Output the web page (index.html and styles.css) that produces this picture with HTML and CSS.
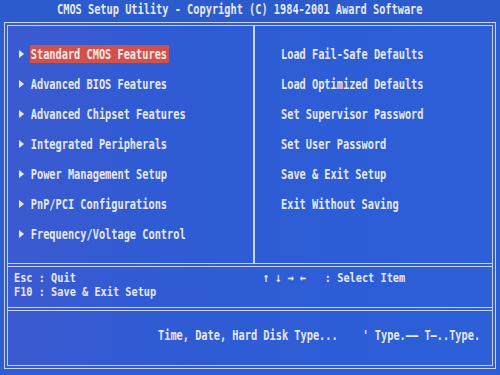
FILE: index.html
```html
<!DOCTYPE html>
<html lang="en">
    <head>
        <meta charset="utf-8">
        <title>CMOS Setup Utility</title>
        <link rel="stylesheet" href="styles.css">
    </head>
    <body>
        <header class="title"><span class="t">CMOS Setup Utility - Copyright (C) 1984-2001 Award Software</span></header>
        <main class="frame">
            <section class="menu">
                <ul class="col left">
                    <li class="sel"><span class="t">Standard CMOS Features</span></li>
                    <li><span class="t">Advanced BIOS Features</span></li>
                    <li><span class="t">Advanced Chipset Features</span></li>
                    <li><span class="t">Integrated Peripherals</span></li>
                    <li><span class="t">Power Management Setup</span></li>
                    <li><span class="t">PnP/PCI Configurations</span></li>
                    <li><span class="t">Frequency/Voltage Control</span></li>
                </ul>
                <ul class="col right">
                    <li><span class="t">Load Fail-Safe Defaults</span></li>
                    <li><span class="t">Load Optimized Defaults</span></li>
                    <li><span class="t">Set Supervisor Password</span></li>
                    <li><span class="t">Set User Password</span></li>
                    <li><span class="t">Save &amp; Exit Setup</span></li>
                    <li><span class="t">Exit Without Saving</span></li>
                </ul>
            </section>
            <section class="keys">
                <div class="line"><span class="t">Esc : Quit</span><span class="t">↑ ↓ → ←   : Select Item</span></div>
                <div class="line"><span class="t">F10 : Save &amp; Exit Setup</span></div>
            </section>
            <section class="desc">
                <span class="t">Time, Date, Hard Disk Type...    ' Type.—— T—..Type.</span>
            </section>
        </main>
    </body>
</html>
```

FILE: styles.css
```css
html {
    background-color: #2c5dd2;
    color: #e6e8f2;
    font-family: "DejaVu Sans Mono", monospace;
    font-weight: bold;
    font-size: 14px;
}

body {
    margin: 0;
    width: 500px;
    height: 375px;
    overflow: hidden;
}

/* BIOS glyphs are tall and narrow: squeeze each text run horizontally */
.t {
    display: inline-block;
    white-space: pre;
    transform: scaleX(.735);
    transform-origin: 0 50%;
}

.title {
    height: 22px;
    line-height: 19px;
    padding-left: 57px;
    background-color: #2b5bcc;
    overflow: hidden;
}

.frame {
    box-sizing: border-box;
    margin: 0 4px;
    height: 347px;
    border: 4px double #c9d2ec;
    display: flex;
    flex-direction: column;
    overflow: hidden;
    background: linear-gradient(90deg, #3c5ad0 0, #2f5bd4 30%, #2c5fd8 100%);
}

.menu {
    display: flex;
    height: 237px;
    flex: none;
    border-bottom: 4px double #c9d2ec;
}

.col {
    list-style: none;
    margin: 0;
    padding: 19px 0 0 0;
    overflow: hidden;
}

.col li {
    height: 30px;
    line-height: 18px;
}

.left {
    box-sizing: border-box;
    flex: none;
    width: 247px;
    border-right: 2px solid #c9d2ec;
    padding-left: 22px;
}

.left li .t {
    position: relative;
    padding: 0 3px 0 1px;
}

.left li .t::before {
    content: "";
    position: absolute;
    left: -15px;
    top: 5px;
    border-left: 7px solid #e6e8f2;
    border-top: 4px solid transparent;
    border-bottom: 4px solid transparent;
}

.left li.sel .t {
    background-color: #d0524e;
    color: #f4e6e6;
}

.right {
    padding-left: 26px;
}

.keys {
    height: 36px;
    flex: none;
    padding: 4px 0 0 6px;
    border-bottom: 4px double #c9d2ec;
    overflow: hidden;
    font-size: 13px;
}

.keys .line {
    display: grid;
    grid-template-columns: 249px auto;
    line-height: 14px;
}

.keys .t {
    transform: scaleX(.79);
}

.desc {
    flex: 1;
    padding: 15px 0 0 150px;
    line-height: 18px;
    overflow: hidden;
}
```
